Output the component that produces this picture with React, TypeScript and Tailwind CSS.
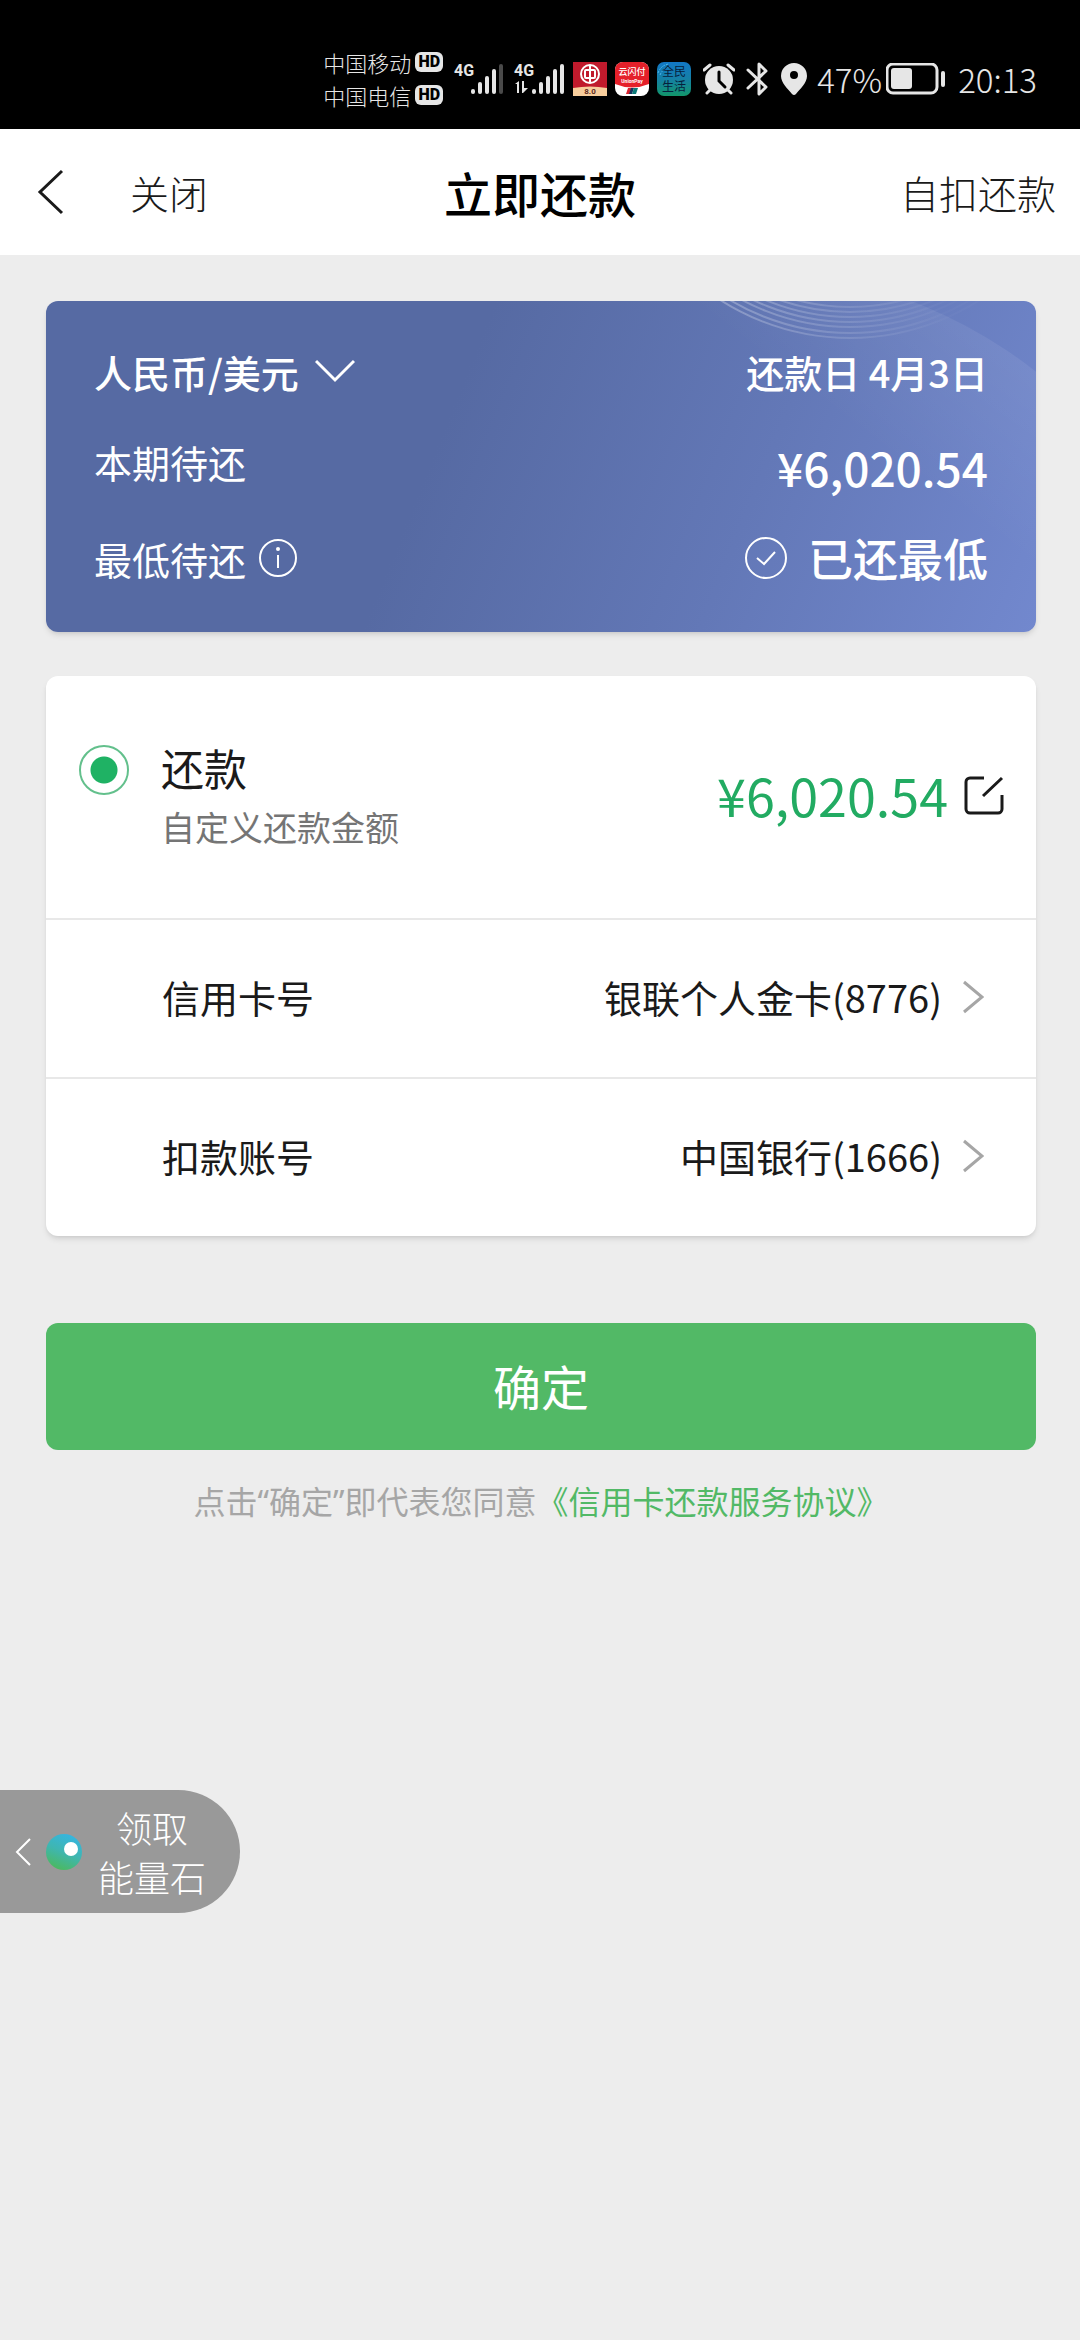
import React from "react";

interface AccountRowProps {
    label: string;
    value: string;
}

interface SignalProps {
    bars: number;
    data?: boolean;
}

const HdBadge: React.FC = () => (
    <span className="flex h-5 w-7 items-center justify-center rounded-md bg-[#e6e6e6] font-[Roboto] text-base leading-5 font-black text-black">
        HD
    </span>
);

const Signal: React.FC<SignalProps> = ({ bars, data }) => {
    const left = data ? 18 : 17;
    return (
        <svg width="52" height="40" viewBox="-1 -3 52 40" fill="#e6e6e6">
            <text x="0" y="14" fontFamily="Roboto" fontSize="16" fontWeight="700">
                4G
            </text>
            {data && (
                <path d="M1 22l4-3v12H3v-9zM8 19h2v7h4l-5 5H8z" />
            )}
            {[5, 12, 18, 25, 30].map((h, i) => (
                <rect
                    key={h}
                    x={left + i * 7}
                    y={32 - h}
                    width="4"
                    height={h}
                    rx="2"
                    fill={i < bars ? "#e6e6e6" : "#4a4a4a"}
                />
            ))}
        </svg>
    );
};

const BankIcon: React.FC = () => (
    <svg width="34" height="34" viewBox="0 0 34 34">
        <rect width="34" height="34" fill="#c01a2c" />
        <path d="M0 26q17-3 34 0v8H0z" fill="#f7cd9c" />
        <circle cx="17" cy="12" r="9" fill="none" stroke="#fff" strokeWidth="2" />
        <path d="M17 3v5M17 16v5" stroke="#fff" strokeWidth="2" />
        <rect x="12" y="8" width="10" height="8" rx="1" fill="none" stroke="#fff" strokeWidth="2" />
        <path d="M17 9v6" stroke="#fff" strokeWidth="2" />
        <text x="17" y="32" textAnchor="middle" fontFamily="Roboto" fontSize="8" fontWeight="700" fill="#5c2a1c">
            8.0
        </text>
    </svg>
);

const UnionPayIcon: React.FC = () => (
    <svg width="34" height="34" viewBox="0 0 34 34">
        <rect width="34" height="34" rx="8" fill="#fff" />
        <path d="M0 22V8a8 8 0 0 1 8-8h18a8 8 0 0 1 8 8v14q-17 7-34 0z" fill="#e5202a" />
        <text x="17" y="13" textAnchor="middle" fontFamily="Noto Sans CJK SC" fontSize="9" fontWeight="500" fill="#fff">
            云闪付
        </text>
        <text x="17" y="21" textAnchor="middle" fontFamily="Roboto" fontSize="5" fontWeight="700" fill="#fff">
            UnionPay
        </text>
        <path d="M13 26h4l-2 6h-4z" fill="#d8232f" />
        <path d="M16 26h3l-2 6h-3z" fill="#16355e" />
        <path d="M19 26h4l-2 6h-4z" fill="#0b7a78" />
    </svg>
);

const LifeIcon: React.FC = () => (
    <svg width="34" height="34" viewBox="0 0 34 34">
        <defs>
            <linearGradient id="life" x1="0" y1="0" x2="0" y2="1">
                <stop offset="0" stopColor="#1277c6" />
                <stop offset="0.5" stopColor="#1580a5" />
                <stop offset="1" stopColor="#12966a" />
            </linearGradient>
        </defs>
        <rect width="34" height="34" rx="7" fill="url(#life)" />
        <path d="M1 11q3-8 11-9M3 13q3-7 10-8" fill="none" stroke="#4bb5e8" strokeWidth="1" strokeDasharray="2 1" />
        <g fontFamily="Noto Sans CJK SC" fontSize="12" fill="#06203c">
            <text x="5" y="14">全民</text>
            <text x="5" y="29">生活</text>
        </g>
    </svg>
);

const StatusBar: React.FC = () => (
    <div className="flex h-[129px] items-center justify-end bg-black pt-7 pr-[43px] text-[#e6e6e6]">
        <div className="mr-[10px] text-[22px] leading-[33px] font-light">
            <div className="flex items-center gap-1">
                中国移动
                <HdBadge />
            </div>
            <div className="flex items-center gap-1">
                中国电信
                <HdBadge />
            </div>
        </div>
        <div className="mr-2 flex gap-2">
            <Signal bars={4} />
            <Signal bars={5} data />
        </div>
        <div className="flex gap-2">
            <BankIcon />
            <UnionPayIcon />
            <LifeIcon />
        </div>
        <svg className="ml-3" width="32" height="32" viewBox="0 0 32 32">
            <path d="M1 7l6-5M31 7l-6-5M7 27l-3 3M25 27l3 3" stroke="#e6e6e6" strokeWidth="3" strokeLinecap="round" />
            <circle cx="16" cy="17" r="14" fill="#e6e6e6" />
            <path d="M16 9v9l6 6" fill="none" stroke="#000" strokeWidth="3" strokeLinecap="round" />
        </svg>
        <svg className="ml-[10px]" width="26" height="34" viewBox="0 0 26 34" fill="none" stroke="#e6e6e6" strokeWidth="3" strokeLinejoin="round" strokeLinecap="round">
            <path d="M3 8l18 17-7 7V2l7 7L3 26" />
        </svg>
        <svg className="ml-[10px]" width="26" height="32" viewBox="0 0 26 32">
            <path d="M13 0a13 13 0 0 1 13 13c0 7-7 13-11 18q-2 2-4 0C7 26 0 20 0 13A13 13 0 0 1 13 0zm0 8a4 4 0 1 0 0 8 4 4 0 0 0 0-8z" fill="#e6e6e6" fillRule="evenodd" />
        </svg>
        <span className="ml-[10px] text-[33px] leading-[34px] font-light">47%</span>
        <svg className="ml-1" width="60" height="32" viewBox="0 0 60 32">
            <rect x="1" y="1" width="50" height="29" rx="6" fill="none" stroke="#e6e6e6" strokeWidth="3" />
            <rect x="5" y="5" width="21" height="21" rx="3" fill="#e6e6e6" />
            <rect x="55" y="8" width="4" height="16" rx="2" fill="#e6e6e6" />
        </svg>
        <span className="ml-3 text-[33px] leading-[34px] font-light">20:13</span>
    </div>
);

const NavBar: React.FC = () => (
    <header className="grid h-[126px] grid-cols-3 items-center bg-white px-6 text-[39px] font-light text-[#1a1a1a]">
        <div className="flex items-center pl-3">
            <button type="button" aria-label="返回">
                <svg width="30" height="46" viewBox="0 0 30 46" fill="none" stroke="currentColor" strokeWidth="3">
                    <path d="M26 2L4 23l22 21" />
                </svg>
            </button>
            <button type="button" className="ml-16">
                关闭
            </button>
        </div>
        <h1 className="text-center text-5xl font-medium text-black">立即还款</h1>
        <a href="#" className="text-right">
            自扣还款
        </a>
    </header>
);

const CardPattern: React.FC = () => (
    <svg className="absolute top-0 right-0" width="400" height="331" viewBox="590 0 400 331" fill="none">
        <defs>
            <linearGradient id="rings" gradientUnits="userSpaceOnUse" x1="670" y1="0" x2="900" y2="0">
                <stop offset="0" stopColor="#fff" stopOpacity="0.28" />
                <stop offset="1" stopColor="#fff" stopOpacity="0.02" />
            </linearGradient>
            <linearGradient id="disc" gradientUnits="userSpaceOnUse" x1="960" y1="40" x2="860" y2="170">
                <stop offset="0" stopColor="#fff" stopOpacity="0.07" />
                <stop offset="1" stopColor="#fff" stopOpacity="0" />
            </linearGradient>
        </defs>
        <circle cx="696" cy="445" r="476" fill="url(#disc)" />
        {[240, 235, 229, 224, 219, 214, 209].map((r) => (
            <circle key={r} cx="804" cy="-203" r={r} stroke="url(#rings)" strokeWidth="2" />
        ))}
    </svg>
);

const BillCard: React.FC = () => (
    <section className="relative overflow-hidden rounded-xl bg-[linear-gradient(112deg,#566aa3_0%,#566aa3_40%,#6378b7_70%,#7288ce_100%)] px-12 text-[38px] text-white shadow-md">
        <CardPattern />
        <div className="relative flex flex-col pt-[38px] pb-[39px]">
            <div className="flex h-16 items-center justify-between font-medium">
                <label className="flex items-center gap-4">
                    <select aria-label="币种" className="appearance-none bg-transparent">
                        <option>人民币/美元</option>
                    </select>
                    <svg width="40" height="24" viewBox="0 0 40 24" fill="none" stroke="currentColor" strokeWidth="3">
                        <path d="M1 2l19 19L39 2" />
                    </svg>
                </label>
                <span>还款日 4月3日</span>
            </div>
            <div className="flex h-[120px] items-center justify-between">
                <span className="pb-1">本期待还</span>
                <span className="pt-2 text-[46px] font-medium">¥6,020.54</span>
            </div>
            <div className="flex h-[70px] items-center justify-between">
                <div className="flex items-center gap-3">
                    <span>最低待还</span>
                    <button type="button" aria-label="说明">
                        <svg width="40" height="40" viewBox="0 0 40 40" fill="none" stroke="currentColor" strokeWidth="2">
                            <circle cx="20" cy="20" r="18" />
                            <path d="M20 17v13" />
                            <circle cx="20" cy="11" r="2" fill="currentColor" stroke="none" />
                        </svg>
                    </button>
                </div>
                <div className="flex items-center gap-5">
                    <svg width="44" height="44" viewBox="0 0 44 44" fill="none" stroke="currentColor" strokeWidth="2">
                        <circle cx="22" cy="22" r="20" />
                        <path d="M13 22l7 6 11-12" />
                    </svg>
                    <span className="text-[45px] font-medium">已还最低</span>
                </div>
            </div>
        </div>
    </section>
);

const AccountRow: React.FC<AccountRowProps> = ({ label, value }) => (
    <button
        type="button"
        className="flex h-[159px] w-full items-center justify-between border-t-2 border-[#e8e8e8] pr-[52px] pb-1 pl-[116px] text-[38px]"
    >
        <span>{label}</span>
        <span className="flex items-center gap-5">
            {value}
            <svg width="22" height="34" viewBox="0 0 22 34" fill="none" stroke="#a6a6a6" strokeWidth="3">
                <path d="M2 2l18 15L2 32" />
            </svg>
        </span>
    </button>
);

const PaymentForm: React.FC = () => (
    <section className="rounded-xl bg-white text-[#1a1a1a] shadow-md">
        <div className="flex h-[242px] items-center justify-between pr-8 pb-1 pl-[33px]">
            <label className="flex gap-8">
                <input
                    type="radio"
                    name="amount"
                    defaultChecked
                    className="mt-[10px] size-[50px] appearance-none rounded-full border-2 border-[#63c08c] bg-[radial-gradient(circle,#1fb264_0_13px,transparent_14px)]"
                />
                <span className="flex flex-col">
                    <span className="text-[43px] leading-[64px]">还款</span>
                    <span className="text-[34px] leading-[56px] text-[#757575]">自定义还款金额</span>
                </span>
            </label>
            <button type="button" className="flex items-center gap-4 text-[52px] text-[#22ab62]">
                ¥6,020.54
                <svg width="40" height="40" viewBox="0 0 40 40" fill="none" stroke="#1a1a1a" strokeWidth="3">
                    <path d="M20 3H6a4 4 0 0 0-4 4v27a4 4 0 0 0 4 4h28a4 4 0 0 0 4-4V20M19 21L38 3" />
                </svg>
            </button>
        </div>
        <AccountRow label="信用卡号" value="银联个人金卡(8776)" />
        <AccountRow label="扣款账号" value="中国银行(1666)" />
    </section>
);

const RewardTab: React.FC = () => (
    <button
        type="button"
        className="flex h-[123px] items-center rounded-r-full bg-[#999] pr-[34px] pl-[14px] text-4xl font-light text-white"
    >
        <svg width="18" height="30" viewBox="0 0 18 30" fill="none" stroke="currentColor" strokeWidth="2">
            <path d="M16 2L3 15l13 13" />
        </svg>
        <svg className="mr-[14px] ml-3" width="40" height="40" viewBox="0 0 40 40">
            <defs>
                <linearGradient id="stone" x1="0.7" y1="0" x2="0.3" y2="1">
                    <stop offset="0" stopColor="#35b5e2" />
                    <stop offset="0.5" stopColor="#3fb6b0" />
                    <stop offset="1" stopColor="#4cb95c" />
                </linearGradient>
            </defs>
            <circle cx="20" cy="20" r="18" fill="url(#stone)" />
            <circle cx="27" cy="17" r="7" fill="#fff" />
        </svg>
        <span className="text-center leading-[49px]">
            领取
            <br />
            能量石
        </span>
    </button>
);

const App: React.FC = () => {
    return (
        <div lang="zh-CN" className="min-h-screen bg-[#ededed] font-['Noto_Sans_CJK_SC',sans-serif]">
            <StatusBar />
            <NavBar />
            <main className="flex flex-col pt-[46px] pr-11 pl-[46px]">
                <BillCard />
                <div className="mt-11">
                    <PaymentForm />
                </div>
                <button
                    type="button"
                    className="mt-[87px] h-[127px] rounded-xl bg-[#52b966] pb-1 text-5xl text-white"
                >
                    确定
                </button>
                <p className="mt-7 text-center font-['Noto_Sans','Noto_Sans_CJK_SC',sans-serif] text-[32px] leading-[48px] text-[#a6a6a6]">
                    点击“确定”即代表您同意
                    <a href="#" className="text-[#52b966]">
                        《信用卡还款服务协议》
                    </a>
                </p>
            </main>
            <div className="mt-[264px]">
                <RewardTab />
            </div>
        </div>
    );
};

export default App;
